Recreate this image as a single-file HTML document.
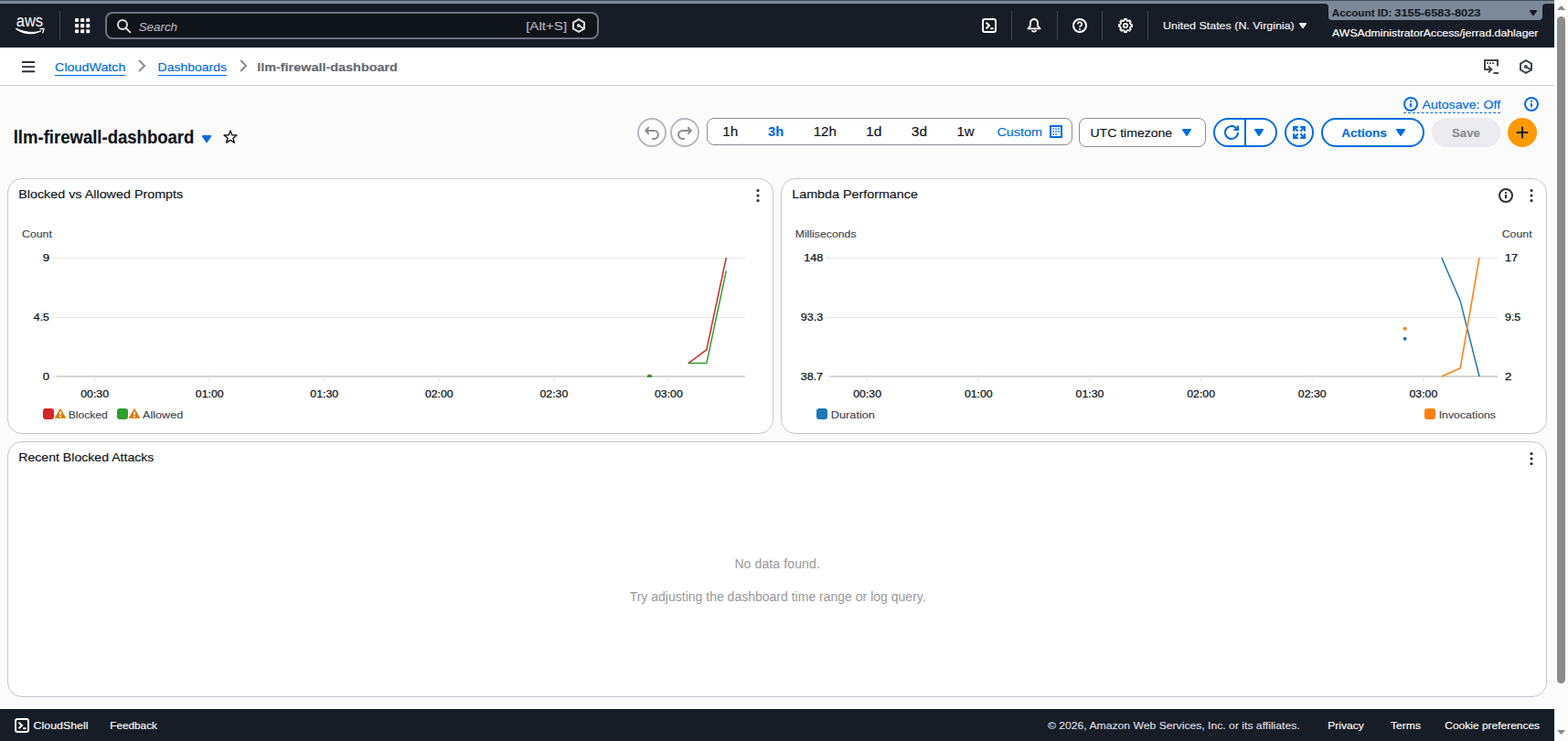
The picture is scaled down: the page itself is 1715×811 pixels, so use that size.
<!DOCTYPE html>
<html lang="en">
<head>
<meta charset="utf-8">
<title>llm-firewall-dashboard | CloudWatch | us-east-1</title>
<style>
*{box-sizing:border-box;margin:0;padding:0}
html,body{width:1715px;height:811px;overflow:hidden;background:#fbfbfc;font-family:"Liberation Sans",sans-serif;color:#0f141a;font-size:14px}
#page{position:relative;width:1715px;height:811px;overflow:hidden}
.abs{position:absolute}
svg{overflow:visible}
.t{position:absolute;white-space:nowrap;text-decoration:none;transform-origin:0 0}
#strip{left:0;top:0;width:1700px;height:52px;background:#7d8998}
#navL{left:0;top:4px;width:1453px;height:48px;background:#161d26;border-top-right-radius:4px}
#acct{left:1453px;top:4px;width:234px;height:48px;background:#161d26;}
#acctbox{left:1453px;top:1px;width:234px;height:21px;background:#7d8998;border-radius:0 0 4px 4px}
#navR{left:1687px;top:4px;width:13px;height:48px;background:#161d26;border-top-left-radius:4px}
.vsep{position:absolute;top:12px;width:1px;height:32px;background:#424650}
#search{left:115px;top:13px;width:540px;height:30px;border:2px solid #6f7380;border-radius:8px;background:#0f141a}
#crumb{left:0;top:52px;width:1700px;height:42px;background:#fff;border-bottom:1px solid #c6c6cd}
.btn{position:absolute;border:2px solid #006ce0;border-radius:16px;background:#fff;height:32px}
.circ{position:absolute;width:32px;height:32px;border-radius:50%}
.box{position:absolute;border:1px solid #8c8c94;border-radius:8px;background:#fff}
.w{position:absolute;background:#fff;border:1px solid #c6c6cd;border-radius:16px}
#foot{left:0;top:776px;width:1700px;height:35px;background:#161d26}
#sb{left:1700px;top:0;width:15px;height:811px;background:#fcfcfc}
#thumb{left:1703px;top:17.5px;width:9px;height:730px;background:#8b8b8b;border-radius:4.5px}
</style>
</head>
<body>
<div id="page">
<header aria-label="AWS Console navigation">
<div id="strip" class="abs"></div>
<div class="abs" style="left:0;top:0;width:1700px;height:1px;background:#424d5d"></div>
<div id="navL" class="abs"></div>
<div id="acct" class="abs"></div><div id="acctbox" class="abs"></div>
<div id="navR" class="abs"></div>
<svg class="abs" style="left:14px;top:14px" width="38" height="28" viewBox="0 0 38 28" ><text x="18.4" y="14.7" text-anchor="middle" font-family="Liberation Sans, sans-serif" font-size="17.6" fill="#fff" textLength="29.3" lengthAdjust="spacingAndGlyphs">aws</text><path d="M3.2 17.4 C9 22.2 21 25.6 30.8 19.8 C22 23 11 21 3.6 17.1 Z" fill="#fff" stroke="#fff" stroke-width="1" stroke-linejoin="round"/><path d="M30 17.7 L34.1 17.4 L32.7 21.9" fill="none" stroke="#fff" stroke-width="1.3" stroke-linejoin="round" stroke-linecap="round"/></svg>
<div class="vsep" style="left:65px"></div>
<div class="vsep" style="left:1106px"></div>
<div class="vsep" style="left:1156px"></div>
<div class="vsep" style="left:1205px"></div>
<div class="vsep" style="left:1255px"></div>
<svg class="abs" style="left:81.9px;top:19.95px" width="17" height="17" viewBox="0 0 17 17" ><g fill="#f4f4f6"><rect x="0" y="0" width="4.05" height="4.05" rx="0.9"/><rect x="6.1" y="0" width="4.05" height="4.05" rx="0.9"/><rect x="12.2" y="0" width="4.05" height="4.05" rx="0.9"/><rect x="0" y="6.1" width="4.05" height="4.05" rx="0.9"/><rect x="6.1" y="6.1" width="4.05" height="4.05" rx="0.9"/><rect x="12.2" y="6.1" width="4.05" height="4.05" rx="0.9"/><rect x="0" y="12.2" width="4.05" height="4.05" rx="0.9"/><rect x="6.1" y="12.2" width="4.05" height="4.05" rx="0.9"/><rect x="12.2" y="12.2" width="4.05" height="4.05" rx="0.9"/></g></svg>
<div id="search" class="abs"></div>
<svg class="abs ic" style="left:127px;top:19.5px" width="17" height="17" viewBox="0 0 17 17" fill="none" stroke="#dedee3" stroke-width="2" stroke-linejoin="round"><circle cx="7" cy="7" r="5"/><path d="M10.7 10.7 L15.2 15.2" stroke-linecap="square"/></svg>
<span class="t" style="left:151px;top:22px;font-size:13px;line-height:15px;color:#b4b4bb;font-style:italic;transform:translateX(0.64px) scaleX(1.029);-webkit-text-stroke-width:0.15px;">Search</span>
<span class="t" style="left:575px;top:21px;font-size:13px;line-height:15px;color:#b4b4bb;transform:translateX(0.16px) scaleX(1.1618);-webkit-text-stroke-width:0.15px;">[Alt+S]</span>
<svg class="abs ic" style="left:625px;top:20px" width="16" height="16" viewBox="0 0 16 16" fill="none" stroke="#dedee3" stroke-width="2" stroke-linejoin="round"><path d="M8 1.1 L14 4.55 V11.45 L8 14.9 L2 11.45 V4.55 Z"/><circle cx="7.8" cy="7.9" r="1.9" fill="#dedee3" stroke="none"/><path d="M8 8 L13.6 11.4" stroke-width="2"/></svg>
<svg class="abs ic" style="left:1074px;top:20px" width="16" height="16" viewBox="0 0 16 16" fill="none" stroke="#fff" stroke-width="2" stroke-linejoin="round"><rect x="1" y="1" width="14" height="14" rx="2.2"/><path d="M4.6 4.7 L8 8 L4.6 11.3" stroke-linejoin="miter"/><path d="M9.2 11.2 H12.6"/></svg>
<svg class="abs ic" style="left:1123px;top:20px" width="16" height="16" viewBox="0 0 16 16" fill="none" stroke="#fff" stroke-width="2" stroke-linejoin="round"><path d="M1.5 11.4 H14.5 L12 8.3 V5 A4 4 0 0 0 4 5 V8.3 Z" stroke-width="1.9"/><path d="M5.7 12.9 A2.4 2.4 0 0 0 10.3 12.9" stroke-width="1.7"/></svg>
<svg class="abs ic" style="left:1173px;top:20px" width="16" height="16" viewBox="0 0 16 16" fill="none" stroke="#fff" stroke-width="2" stroke-linejoin="round"><circle cx="8" cy="8" r="7"/><path d="M5.9 6.5 A2.15 2.15 0 1 1 8.9 8.4 C8.3 8.8 8 9.1 8 10.1" stroke-width="1.6" stroke-linejoin="round"/><circle cx="8" cy="12.1" r="1" fill="#fff" stroke="none"/></svg>
<svg class="abs ic" style="left:1223px;top:20px" width="16" height="16" viewBox="0 0 16 16" fill="none" stroke="#fff" stroke-width="2" stroke-linejoin="round"><path d="M6.67 2.46 L6.83 0.95 L9.17 0.95 L9.33 2.46 L10.98 3.14 L12.16 2.18 L13.82 3.84 L12.86 5.02 L13.54 6.67 L15.05 6.83 L15.05 9.17 L13.54 9.33 L12.86 10.98 L13.82 12.16 L12.16 13.82 L10.98 12.86 L9.33 13.54 L9.17 15.05 L6.83 15.05 L6.67 13.54 L5.02 12.86 L3.84 13.82 L2.18 12.16 L3.14 10.98 L2.46 9.33 L0.95 9.17 L0.95 6.83 L2.46 6.67 L3.14 5.02 L2.18 3.84 L3.84 2.18 L5.02 3.14 Z" stroke-width="1.7"/><circle cx="8" cy="8" r="2.2" stroke-width="1.7"/></svg>
<span class="t" style="left:1272px;top:22px;font-size:11px;line-height:12px;color:#f3f3f7;transform:translateX(0.03px) scaleX(1.1318);-webkit-text-stroke-width:0.15px;">United States (N. Virginia)</span>
<svg class="abs" style="left:1420px;top:24px" width="10" height="8.2" viewBox="-1 -1 10 8.2"><path d="M0.9 0.9 H7.1 L4.0 5.3 Z" fill="#f3f3f7" stroke="#f3f3f7" stroke-width="1.8" stroke-linejoin="round"/></svg>
<span class="t" style="left:1456px;top:9px;font-size:10px;line-height:11px;color:#161d26;font-weight:bold;transform:translateX(0.78px) scaleX(1.1692);-webkit-text-stroke-width:0.15px;">Account ID:</span>
<span class="t" style="left:1525px;top:9px;font-size:10px;line-height:11px;color:#161d26;font-weight:bold;transform:translateX(0.24px) scaleX(1.2842);-webkit-text-stroke-width:0.15px;">3155-6583-8023</span>
<svg class="abs" style="left:1672px;top:10.3px" width="10" height="8" viewBox="-1 -1 10 8"><path d="M0.9 0.9 H7.1 L4.0 5.1 Z" fill="#161d26" stroke="#161d26" stroke-width="1.8" stroke-linejoin="round"/></svg>
<span class="t" style="left:1457px;top:31px;font-size:10px;line-height:11px;color:#ffffff;transform:translateX(0.07px) scaleX(1.2273);-webkit-text-stroke-width:0.15px;">AWSAdministratorAccess/jerrad.dahlager</span>
</header>
<nav aria-label="Breadcrumbs">
<div id="crumb" class="abs"></div>
<svg class="abs ic" style="left:23px;top:65px" width="16" height="16" viewBox="0 0 16 16" fill="none" stroke="#2b303b" stroke-width="2" stroke-linejoin="round"><path d="M1 3H15M1 8.1H15M1 13.2H15" stroke-width="1.9"/></svg>
<a class="t lnk" style="left:60px;top:66px;font-size:13px;line-height:15px;color:#006ce0;transform:translateX(0.1px) scaleX(1.0996);-webkit-text-stroke-width:0.15px;">CloudWatch</a>
<div class="abs" style="left:60px;top:82px;width:77px;height:1px;background:#006ce0"></div>
<svg class="abs ic" style="left:147px;top:64.2px" width="16" height="16" viewBox="0 0 16 16" fill="none" stroke="#8c8c94" stroke-width="2" stroke-linejoin="round"><path d="M5.2 2 L11 8 L5.2 14" stroke-linejoin="miter"/></svg>
<a class="t lnk" style="left:172px;top:66px;font-size:13px;line-height:15px;color:#006ce0;transform:translateX(0.56px) scaleX(1.0747);-webkit-text-stroke-width:0.15px;">Dashboards</a>
<div class="abs" style="left:173px;top:82px;width:75px;height:1px;background:#006ce0"></div>
<svg class="abs ic" style="left:258px;top:64.2px" width="16" height="16" viewBox="0 0 16 16" fill="none" stroke="#8c8c94" stroke-width="2" stroke-linejoin="round"><path d="M5.2 2 L11 8 L5.2 14" stroke-linejoin="miter"/></svg>
<span class="t" style="left:281px;top:66px;font-size:13px;line-height:15px;color:#656871;font-weight:bold;transform:translateX(0.16px) scaleX(1.1086);-webkit-text-stroke-width:0.15px;">llm-firewall-dashboard</span>
<svg class="abs ic" style="left:1623px;top:65px" width="16" height="16" viewBox="0 0 16 16" fill="none" stroke="#424650" stroke-width="2" stroke-linejoin="round"><path d="M7 11 H1 V1 H15 V7.5" stroke-linejoin="miter"/><path d="M3.1 4.2 H4.9 M6.1 4.2 H7.9 M9.1 4.2 H10.9" stroke-width="1.8"/><path d="M5 7.6 L8.4 11 L5 14.4" stroke-linejoin="miter"/><path d="M10.4 15 H16"/></svg>
<svg class="abs ic" style="left:1661px;top:65px" width="16" height="16" viewBox="0 0 16 16" fill="none" stroke="#424650" stroke-width="2" stroke-linejoin="round"><path d="M8 1.1 L14 4.55 V11.45 L8 14.9 L2 11.45 V4.55 Z"/><circle cx="7.8" cy="7.9" r="1.9" fill="#424650" stroke="none"/><path d="M8 8 L13.6 11.4" stroke-width="2"/></svg>
</nav>
<main>
<section aria-label="Dashboard toolbar">
<h1 class="t" style="left:14px;top:139px;font-size:19.5px;line-height:22px;color:#0f141a;font-weight:bold;transform:translateX(0.71px) scaleX(0.9503);-webkit-text-stroke-width:0.15px;">llm-firewall-dashboard</h1>
<svg class="abs" style="left:219.6px;top:147.2px" width="12.2" height="10.1" viewBox="-1 -1 12.2 10.1"><path d="M0.9 0.9 H9.299999999999999 L5.1 7.199999999999999 Z" fill="#006ce0" stroke="#006ce0" stroke-width="1.8" stroke-linejoin="round"/></svg>
<svg class="abs ic" style="left:244px;top:142px" width="16" height="16" viewBox="0 0 16 16" fill="none" stroke="#0f141a" stroke-width="1.4" stroke-linejoin="round"><path d="M8.00 1.00 L9.82 5.79 L14.94 6.04 L10.95 9.26 L12.29 14.21 L8.00 11.40 L3.71 14.21 L5.05 9.26 L1.06 6.04 L6.18 5.79 Z"/></svg>
<div class="circ" style="left:697px;top:129px;border:2px solid #b6b6be;background:#fff"></div>
<div class="circ" style="left:733px;top:129px;border:2px solid #b6b6be;background:#fff"></div>
<svg class="abs ic" style="left:705px;top:137px" width="16" height="16" viewBox="0 0 16 16" fill="none" stroke="#8c8c94" stroke-width="2" stroke-linejoin="round"><path d="M8.2 14.9 H10.45 A4.45 4.45 0 0 0 10.45 6 H1.8" stroke-linejoin="miter"/><path d="M4.7 2.3 L1.3 6 L4.7 9.7" stroke-linejoin="miter"/></svg>
<svg class="abs ic" style="left:741px;top:137px" width="16" height="16" viewBox="0 0 16 16" fill="none" stroke="#8c8c94" stroke-width="2" stroke-linejoin="round"><path d="M7.8 14.9 H5.55 A4.45 4.45 0 0 1 5.55 6 H14.2" stroke-linejoin="miter"/><path d="M11.3 2.3 L14.7 6 L11.3 9.7" stroke-linejoin="miter"/></svg>
<div class="box" style="left:773px;top:129px;width:400px;height:30px"></div>
<span class="t" style="left:790px;top:136px;font-size:14px;line-height:16px;color:#0f141a;transform:translateX(0.33px) scaleX(1.0917);-webkit-text-stroke-width:0.15px;">1h</span>
<span class="t" style="left:840px;top:136px;font-size:14px;line-height:16px;color:#006ce0;font-weight:bold;transform:translateX(0.07px) scaleX(1.0458);-webkit-text-stroke-width:0.15px;">3h</span>
<span class="t" style="left:889px;top:136px;font-size:14px;line-height:16px;color:#0f141a;transform:translateX(0.64px) scaleX(1.0802);-webkit-text-stroke-width:0.15px;">12h</span>
<span class="t" style="left:947px;top:136px;font-size:14px;line-height:16px;color:#0f141a;transform:translateX(0.12px) scaleX(1.1208);-webkit-text-stroke-width:0.15px;">1d</span>
<span class="t" style="left:996px;top:136px;font-size:14px;line-height:16px;color:#0f141a;transform:translateX(0.87px) scaleX(1.1065);-webkit-text-stroke-width:0.15px;">3d</span>
<span class="t" style="left:1046px;top:136px;font-size:14px;line-height:16px;color:#0f141a;transform:translateX(0.46px) scaleX(1.0702);-webkit-text-stroke-width:0.15px;">1w</span>
<span class="t" style="left:1090px;top:137px;font-size:13px;line-height:15px;color:#006ce0;transform:translateX(0.4px) scaleX(1.1059);-webkit-text-stroke-width:0.15px;">Custom</span>
<svg class="abs ic" style="left:1148px;top:137px" width="14" height="14" viewBox="0 0 14 14" fill="none" stroke="#006ce0" stroke-width="2" stroke-linejoin="round"><rect x="1" y="1" width="12" height="12" stroke-linejoin="miter"/><rect x="3.25" y="3.3" width="1.7" height="1.5" fill="#006ce0" stroke="none"/><rect x="6.15" y="3.3" width="1.7" height="1.5" fill="#006ce0" stroke="none"/><rect x="9.15" y="3.3" width="1.7" height="1.5" fill="#006ce0" stroke="none"/><rect x="3.25" y="6.25" width="1.7" height="1.5" fill="#006ce0" stroke="none"/><rect x="6.15" y="6.25" width="1.7" height="1.5" fill="#006ce0" stroke="none"/><rect x="9.15" y="6.25" width="1.7" height="1.5" fill="#006ce0" stroke="none"/><rect x="3.25" y="9.25" width="1.7" height="1.5" fill="#006ce0" stroke="none"/><rect x="6.15" y="9.25" width="1.7" height="1.5" fill="#006ce0" stroke="none"/></svg>
<div class="box" style="left:1180px;top:129px;width:139px;height:32px"></div>
<span class="t" style="left:1192px;top:138px;font-size:13px;line-height:15px;color:#0f141a;transform:translateX(0.47px) scaleX(1.0797);-webkit-text-stroke-width:0.15px;">UTC timezone</span>
<svg class="abs" style="left:1292.2px;top:140.2px" width="12" height="10" viewBox="-1 -1 12 10"><path d="M0.9 0.9 H9.1 L5.0 7.1 Z" fill="#006ce0" stroke="#006ce0" stroke-width="1.8" stroke-linejoin="round"/></svg>
<div class="btn" style="left:1327px;top:129px;width:70px"></div>
<div class="abs" style="left:1361px;top:129px;width:2px;height:32px;background:#006ce0"></div>
<svg class="abs ic" style="left:1339px;top:137px" width="16" height="16" viewBox="0 0 16 16" fill="none" stroke="#006ce0" stroke-width="2" stroke-linejoin="round"><path d="M15 8 A7 7 0 1 1 14.33 5"/><path d="M15 0.4 V5 H10.4" stroke-linejoin="miter"/></svg>
<svg class="abs" style="left:1371px;top:140.2px" width="12" height="10" viewBox="-1 -1 12 10"><path d="M0.9 0.9 H9.1 L5.0 7.1 Z" fill="#006ce0" stroke="#006ce0" stroke-width="1.8" stroke-linejoin="round"/></svg>
<div class="btn" style="left:1405px;top:129px;width:32px"></div>
<svg class="abs ic" style="left:1414px;top:138px" width="14" height="14" viewBox="0 0 14 14" fill="none" stroke="#006ce0" stroke-width="2" stroke-linejoin="round"><path d="M0 0 H5.8 V2.2 H2.2 V5.8 H0 Z" fill="#006ce0" stroke="none"/><path d="M1.2 1.2 L5.6 5.6" stroke-width="2.1" stroke-linecap="butt"/><path d="M14 0 H8.2 V2.2 H11.8 V5.8 H14 Z" fill="#006ce0" stroke="none"/><path d="M12.8 1.2 L8.4 5.6" stroke-width="2.1" stroke-linecap="butt"/><path d="M14 14 H8.2 V11.8 H11.8 V8.2 H14 Z" fill="#006ce0" stroke="none"/><path d="M12.8 12.8 L8.4 8.4" stroke-width="2.1" stroke-linecap="butt"/><path d="M0 14 H5.8 V11.8 H2.2 V8.2 H0 Z" fill="#006ce0" stroke="none"/><path d="M1.2 12.8 L5.6 8.4" stroke-width="2.1" stroke-linecap="butt"/></svg>
<div class="btn" style="left:1445px;top:129px;width:113px"></div>
<span class="t" style="left:1467px;top:138px;font-size:13px;line-height:15px;color:#006ce0;font-weight:bold;transform:translateX(0.21px) scaleX(1.0376);-webkit-text-stroke-width:0.15px;">Actions</span>
<svg class="abs" style="left:1526px;top:140.2px" width="12" height="10" viewBox="-1 -1 12 10"><path d="M0.9 0.9 H9.1 L5.0 7.1 Z" fill="#006ce0" stroke="#006ce0" stroke-width="1.8" stroke-linejoin="round"/></svg>
<div class="abs" style="left:1566px;top:129px;width:75px;height:32px;border-radius:16px;background:#ebebf0"></div>
<span class="t" style="left:1587px;top:138px;font-size:13px;line-height:15px;color:#8c8c94;font-weight:bold;transform:translateX(0.93px) scaleX(1.0189);-webkit-text-stroke-width:0.15px;">Save</span>
<div class="circ" style="left:1649px;top:129px;background:#ff9900"></div>
<svg class="abs ic" style="left:1657px;top:137px" width="16" height="16" viewBox="0 0 16 16" fill="none" stroke="#0f141a" stroke-width="2" stroke-linejoin="round"><path d="M8 1.8 V14.2 M1.8 8 H14.2"/></svg>
<svg class="abs ic" style="left:1535px;top:106px" width="16" height="16" viewBox="0 0 16 16" fill="none" stroke="#006ce0" stroke-width="2" stroke-linejoin="round"><circle cx="8" cy="8" r="7"/><path d="M8 7.1 V11.3" stroke-width="2"/><rect x="7" y="3.9" width="2" height="2" rx="0.4" fill="#006ce0" stroke="none"/></svg>
<span class="t" style="left:1555px;top:107px;font-size:13px;line-height:15px;color:#006ce0;transform:translateX(0.47px) scaleX(1.0901);-webkit-text-stroke-width:0.15px;">Autosave: Off</span>
<div class="abs" style="left:1535px;top:123px;width:106px;height:0;border-top:1px dashed #006ce0"></div>
<svg class="abs ic" style="left:1667px;top:106px" width="16" height="16" viewBox="0 0 16 16" fill="none" stroke="#006ce0" stroke-width="2" stroke-linejoin="round"><circle cx="8" cy="8" r="7"/><path d="M8 7.1 V11.3" stroke-width="2"/><rect x="7" y="3.9" width="2" height="2" rx="0.4" fill="#006ce0" stroke="none"/></svg>
</section>
<section aria-label="Dashboard widgets">
<div class="w" style="left:8px;top:195px;width:838px;height:280px"></div>
<div class="w" style="left:854px;top:195px;width:838px;height:280px"></div>
<div class="w" style="left:8px;top:483px;width:1684px;height:280px"></div>
<h2 class="t" style="left:20px;top:205px;font-size:13px;line-height:15px;color:#0f141a;font-weight:normal;transform:translateX(0.23px) scaleX(1.1023);-webkit-text-stroke-width:0.15px;">Blocked vs Allowed Prompts</h2>
<h2 class="t" style="left:866px;top:205px;font-size:13px;line-height:15px;color:#0f141a;font-weight:normal;transform:translateX(0.23px) scaleX(1.1014);-webkit-text-stroke-width:0.15px;">Lambda Performance</h2>
<h2 class="t" style="left:20px;top:493px;font-size:13px;line-height:15px;color:#0f141a;font-weight:normal;transform:translateX(0.24px) scaleX(1.085);-webkit-text-stroke-width:0.15px;">Recent Blocked Attacks</h2>
<svg class="abs ic" style="left:821px;top:206px" width="16" height="16" viewBox="0 0 16 16" fill="none" stroke="none" stroke-width="2" stroke-linejoin="round"><circle cx="8" cy="2.5" r="1.6" fill="#2b303b" stroke="none"/><circle cx="8" cy="8" r="1.6" fill="#2b303b" stroke="none"/><circle cx="8" cy="13.5" r="1.6" fill="#2b303b" stroke="none"/></svg>
<svg class="abs ic" style="left:1667px;top:206px" width="16" height="16" viewBox="0 0 16 16" fill="none" stroke="none" stroke-width="2" stroke-linejoin="round"><circle cx="8" cy="2.5" r="1.6" fill="#2b303b" stroke="none"/><circle cx="8" cy="8" r="1.6" fill="#2b303b" stroke="none"/><circle cx="8" cy="13.5" r="1.6" fill="#2b303b" stroke="none"/></svg>
<svg class="abs ic" style="left:1667px;top:494px" width="16" height="16" viewBox="0 0 16 16" fill="none" stroke="none" stroke-width="2" stroke-linejoin="round"><circle cx="8" cy="2.5" r="1.6" fill="#2b303b" stroke="none"/><circle cx="8" cy="8" r="1.6" fill="#2b303b" stroke="none"/><circle cx="8" cy="13.5" r="1.6" fill="#2b303b" stroke="none"/></svg>
<svg class="abs ic" style="left:1639px;top:206px" width="16" height="16" viewBox="0 0 16 16" fill="none" stroke="#2b303b" stroke-width="2" stroke-linejoin="round"><circle cx="8" cy="8" r="7"/><path d="M8 7.1 V11.3" stroke-width="2"/><rect x="7" y="3.9" width="2" height="2" rx="0.4" fill="#2b303b" stroke="none"/></svg>
<span class="t" style="left:23px;top:250px;font-size:11px;line-height:12px;color:#424650;transform:translateX(0.99px) scaleX(1.1202);-webkit-text-stroke-width:0.15px;">Count</span>
<svg class="abs" style="left:0;top:0" width="1700" height="500" viewBox="0 0 1700 500" style="pointer-events:none"><path d="M57 282.5 H815 M57 347.5 H815 M57 412 H62" stroke="#e6e6e6" stroke-width="1" fill="none"/><path d="M62 412 H815" stroke="#c4c4c4" stroke-width="1.6" fill="none"/><path d="M103.5 412.6 V418 M229.1 412.6 V418 M354.6 412.6 V418 M480.1 412.6 V418 M605.7 412.6 V418 M731.2 412.6 V418" stroke="#e9e9e9" stroke-width="1" fill="none"/><clipPath id="cp1"><rect x="57" y="270" width="760" height="143"/></clipPath><g clip-path="url(#cp1)"><circle cx="710.5" cy="412.4" r="2.7" fill="#d62728"/><circle cx="710.5" cy="412.4" r="2.4" fill="#2ca02c"/></g><path d="M752.8 397.6 L772.8 397.6 L794.3 296.4" stroke="#2ca02c" stroke-width="1.5" fill="none" stroke-linejoin="miter"/><path d="M752.8 397.6 L772.8 382.8 L794.3 282" stroke="#d62728" stroke-width="1.5" fill="none" stroke-linejoin="miter"/></svg>
<span class="t" style="left:46px;top:276px;font-size:11px;line-height:12px;color:#0f141a;transform:translateX(0.74px) scaleX(1.2147);-webkit-text-stroke-width:0.25px;">9</span>
<span class="t" style="left:36px;top:341px;font-size:11px;line-height:12px;color:#0f141a;transform:translateX(0.82px) scaleX(1.1174);-webkit-text-stroke-width:0.25px;">4.5</span>
<span class="t" style="left:46px;top:406px;font-size:11px;line-height:12px;color:#0f141a;transform:translateX(0.64px) scaleX(1.1946);-webkit-text-stroke-width:0.25px;">0</span>
<span class="t" style="left:88px;top:425px;font-size:11px;line-height:12px;color:#0f141a;transform:translateX(0.25px) scaleX(1.1194);-webkit-text-stroke-width:0.25px;">00:30</span>
<span class="t" style="left:213px;top:425px;font-size:11px;line-height:12px;color:#0f141a;transform:translateX(0.8px) scaleX(1.1194);-webkit-text-stroke-width:0.25px;">01:00</span>
<span class="t" style="left:339px;top:425px;font-size:11px;line-height:12px;color:#0f141a;transform:translateX(0.35px) scaleX(1.1194);-webkit-text-stroke-width:0.25px;">01:30</span>
<span class="t" style="left:464px;top:425px;font-size:11px;line-height:12px;color:#0f141a;transform:translateX(0.9px) scaleX(1.1194);-webkit-text-stroke-width:0.25px;">02:00</span>
<span class="t" style="left:590px;top:425px;font-size:11px;line-height:12px;color:#0f141a;transform:translateX(0.45px) scaleX(1.1194);-webkit-text-stroke-width:0.25px;">02:30</span>
<span class="t" style="left:716px;top:425px;font-size:11px;line-height:12px;color:#0f141a;transform:scaleX(1.1194);-webkit-text-stroke-width:0.25px;">03:00</span>
<div class="abs" style="left:47px;top:447px;width:12px;height:12px;border-radius:3px;background:#d62728"></div>
<svg class="abs" style="left:60px;top:447.3px" width="12" height="11" viewBox="0 0 12 11"><path d="M6 0.8 L11.4 10.2 H0.6 Z" fill="#e07b00" stroke="#e07b00" stroke-width="1.2" stroke-linejoin="round"/><path d="M6 3.5 V7" stroke="#fff" stroke-width="1.9"/><rect x="5.05" y="7.8" width="1.9" height="1.7" fill="#fff"/></svg>
<span class="t" style="left:74px;top:448px;font-size:11px;line-height:12px;color:#424650;transform:translateX(0.68px) scaleX(1.1008);-webkit-text-stroke-width:0.15px;">Blocked</span>
<div class="abs" style="left:128px;top:447px;width:12px;height:12px;border-radius:3px;background:#2ca02c"></div>
<svg class="abs" style="left:141px;top:447.3px" width="12" height="11" viewBox="0 0 12 11"><path d="M6 0.8 L11.4 10.2 H0.6 Z" fill="#e07b00" stroke="#e07b00" stroke-width="1.2" stroke-linejoin="round"/><path d="M6 3.5 V7" stroke="#fff" stroke-width="1.9"/><rect x="5.05" y="7.8" width="1.9" height="1.7" fill="#fff"/></svg>
<span class="t" style="left:156px;top:448px;font-size:11px;line-height:12px;color:#424650;transform:translateX(0.07px) scaleX(1.1462);-webkit-text-stroke-width:0.15px;">Allowed</span>
<span class="t" style="left:869px;top:250px;font-size:11px;line-height:12px;color:#424650;transform:translateX(0.66px) scaleX(1.1159);-webkit-text-stroke-width:0.15px;">Milliseconds</span>
<span class="t" style="left:1642px;top:250px;font-size:11px;line-height:12px;color:#424650;transform:translateX(0.69px) scaleX(1.1202);-webkit-text-stroke-width:0.15px;">Count</span>
<svg class="abs" style="left:0;top:0" width="1700" height="500" viewBox="0 0 1700 500"><path d="M903 282.5 H1638 M903 347.5 H1638 M903 412 H908" stroke="#e6e6e6" stroke-width="1" fill="none"/><path d="M908 412 H1638" stroke="#c4c4c4" stroke-width="1.6" fill="none"/><path d="M948.5 412.6 V418 M1070.2 412.6 V418 M1191.8 412.6 V418 M1313.5 412.6 V418 M1435.1 412.6 V418 M1556.8 412.6 V418" stroke="#e9e9e9" stroke-width="1" fill="none"/><circle cx="1536.6" cy="359.8" r="2" fill="#ff7f0e"/><circle cx="1536.6" cy="370.7" r="2" fill="#1f77b4"/><path d="M1576.8 282 L1597.2 329.4 L1618 412" stroke="#1f77b4" stroke-width="1.5" fill="none"/><path d="M1576.8 412 L1597.2 402.9 L1618 282" stroke="#ff7f0e" stroke-width="1.5" fill="none"/></svg>
<span class="t" style="left:879px;top:276px;font-size:11px;line-height:12px;color:#0f141a;transform:translateX(0.15px) scaleX(1.1465);-webkit-text-stroke-width:0.25px;">148</span>
<span class="t" style="left:875px;top:341px;font-size:11px;line-height:12px;color:#0f141a;transform:translateX(0.77px) scaleX(1.1385);-webkit-text-stroke-width:0.25px;">93.3</span>
<span class="t" style="left:875px;top:406px;font-size:11px;line-height:12px;color:#0f141a;transform:translateX(0.69px) scaleX(1.1371);-webkit-text-stroke-width:0.25px;">38.7</span>
<span class="t" style="left:1645px;top:276px;font-size:11px;line-height:12px;color:#0f141a;transform:translateX(0.95px) scaleX(1.1615);-webkit-text-stroke-width:0.25px;">17</span>
<span class="t" style="left:1645px;top:341px;font-size:11px;line-height:12px;color:#0f141a;transform:translateX(0.97px) scaleX(1.1306);-webkit-text-stroke-width:0.25px;">9.5</span>
<span class="t" style="left:1645px;top:406px;font-size:11px;line-height:12px;color:#0f141a;transform:translateX(0.93px) scaleX(1.2069);-webkit-text-stroke-width:0.25px;">2</span>
<span class="t" style="left:933px;top:425px;font-size:11px;line-height:12px;color:#0f141a;transform:translateX(0.25px) scaleX(1.1194);-webkit-text-stroke-width:0.25px;">00:30</span>
<span class="t" style="left:1054px;top:425px;font-size:11px;line-height:12px;color:#0f141a;transform:translateX(0.9px) scaleX(1.1194);-webkit-text-stroke-width:0.25px;">01:00</span>
<span class="t" style="left:1176px;top:425px;font-size:11px;line-height:12px;color:#0f141a;transform:translateX(0.55px) scaleX(1.1194);-webkit-text-stroke-width:0.25px;">01:30</span>
<span class="t" style="left:1298px;top:425px;font-size:11px;line-height:12px;color:#0f141a;transform:translateX(0.2px) scaleX(1.1194);-webkit-text-stroke-width:0.25px;">02:00</span>
<span class="t" style="left:1419px;top:425px;font-size:11px;line-height:12px;color:#0f141a;transform:translateX(0.85px) scaleX(1.1194);-webkit-text-stroke-width:0.25px;">02:30</span>
<span class="t" style="left:1541px;top:425px;font-size:11px;line-height:12px;color:#0f141a;transform:translateX(0.5px) scaleX(1.1194);-webkit-text-stroke-width:0.25px;">03:00</span>
<div class="abs" style="left:893px;top:447px;width:12px;height:12px;border-radius:3px;background:#1f77b4"></div>
<span class="t" style="left:908px;top:448px;font-size:11px;line-height:12px;color:#424650;transform:translateX(0.76px) scaleX(1.1586);-webkit-text-stroke-width:0.15px;">Duration</span>
<div class="abs" style="left:1558px;top:447px;width:12px;height:12px;border-radius:3px;background:#ff7f0e"></div>
<span class="t" style="left:1573px;top:448px;font-size:11px;line-height:12px;color:#424650;transform:translateX(0.63px) scaleX(1.121);-webkit-text-stroke-width:0.15px;">Invocations</span>
<span class="t" style="left:803px;top:609px;font-size:14px;line-height:16px;color:#999999;letter-spacing:0.120px;transform:translateX(0.39px);">No data found.</span>
<span class="t" style="left:688px;top:645px;font-size:14px;line-height:16px;color:#999999;letter-spacing:0.005px;transform:translateX(0.66px);">Try adjusting the dashboard time range or log query.</span>
</section>
</main>
<footer>
<div id="foot" class="abs"></div>
<svg class="abs ic" style="left:16px;top:786px" width="16" height="16" viewBox="0 0 16 16" fill="none" stroke="#fff" stroke-width="2" stroke-linejoin="round"><rect x="1" y="1" width="14" height="14" rx="2.2"/><path d="M4.6 4.7 L8 8 L4.6 11.3" stroke-linejoin="miter"/><path d="M9.2 11.2 H12.6"/></svg>
<a class="t" style="left:36px;top:788px;font-size:11px;line-height:12px;color:#fff;transform:translateX(0.58px) scaleX(1.124);-webkit-text-stroke-width:0.15px;">CloudShell</a>
<a class="t" style="left:120px;top:788px;font-size:11px;line-height:12px;color:#fff;transform:translateX(0.2px) scaleX(1.0714);-webkit-text-stroke-width:0.15px;">Feedback</a>
<span class="t" style="left:1145px;top:788px;font-size:11px;line-height:12px;color:#dedee3;transform:translateX(0.88px) scaleX(1.1068);-webkit-text-stroke-width:0.15px;">© 2026, Amazon Web Services, Inc. or its affiliates.</span>
<a class="t" style="left:1452px;top:788px;font-size:11px;line-height:12px;color:#fff;transform:translateX(0.18px) scaleX(1.0986);-webkit-text-stroke-width:0.15px;">Privacy</a>
<a class="t" style="left:1521px;top:788px;font-size:11px;line-height:12px;color:#fff;transform:translateX(0.05px) scaleX(1.1003);-webkit-text-stroke-width:0.15px;">Terms</a>
<a class="t" style="left:1580px;top:788px;font-size:11px;line-height:12px;color:#fff;transform:translateX(0.3px) scaleX(1.0881);-webkit-text-stroke-width:0.15px;">Cookie preferences</a>
</footer>
<div id="sb" class="abs"></div><div id="thumb" class="abs"></div>
<svg class="abs" style="left:1700px;top:0" width="15" height="811" viewBox="0 0 15 811"><path d="M3 11 L7.6 5.9 L12.2 11 Z" fill="#8b8b8b"/><path d="M3 799 L7.6 804.1 L12.2 799 Z" fill="#8b8b8b"/></svg>
</div>
</body>
</html>
